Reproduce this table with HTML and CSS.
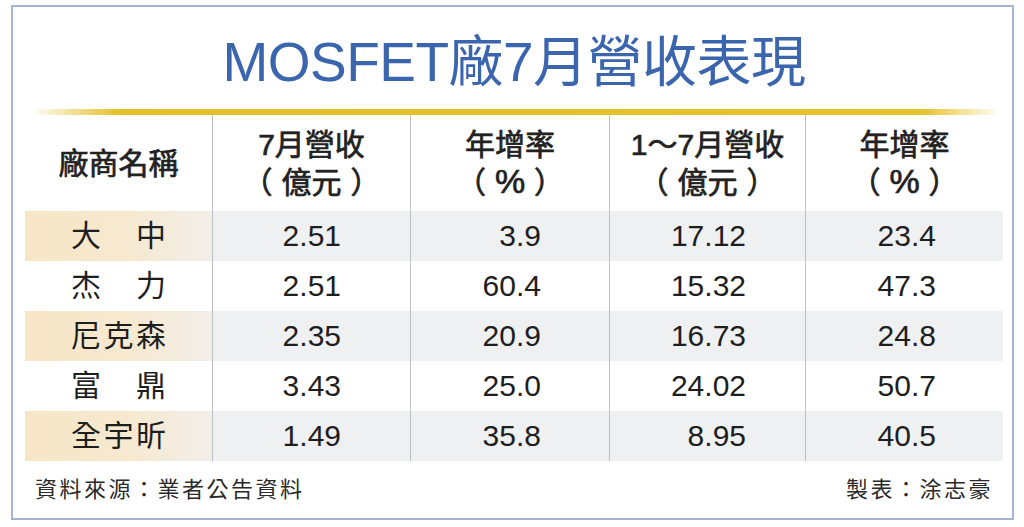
FILE: index.html
```html
<!DOCTYPE html>
<html lang="zh-Hant">
<head>
<meta charset="utf-8">
<title>MOSFET廠7月營收表現</title>
<link rel="stylesheet" href="styles.css">
</head>
<body>
<div class="frame">
  <h1 class="title">MOSFET廠7月營收表現</h1>
  <div class="gold"></div>
  <div class="table">
    <div class="row head">
      <div class="cell name-h">廠商名稱</div>
      <div class="cell">7月營收<br>（<span class="pi">億元</span>）</div>
      <div class="cell">年增率<br>（<span class="pi pct">%</span>）</div>
      <div class="cell">1～7月營收<br>（<span class="pi">億元</span>）</div>
      <div class="cell">年增率<br>（<span class="pi pct">%</span>）</div>
    </div>
    <div class="row band">
      <div class="cell name"><span class="nm"><span>大</span><span>中</span></span></div>
      <div class="cell num c2">2.51</div>
      <div class="cell num c3">3.9</div>
      <div class="cell num c4">17.12</div>
      <div class="cell num c5">23.4</div>
    </div>
    <div class="row">
      <div class="cell name"><span class="nm"><span>杰</span><span>力</span></span></div>
      <div class="cell num c2">2.51</div>
      <div class="cell num c3">60.4</div>
      <div class="cell num c4">15.32</div>
      <div class="cell num c5">47.3</div>
    </div>
    <div class="row band">
      <div class="cell name"><span class="nm"><span>尼</span><span>克</span><span>森</span></span></div>
      <div class="cell num c2">2.35</div>
      <div class="cell num c3">20.9</div>
      <div class="cell num c4">16.73</div>
      <div class="cell num c5">24.8</div>
    </div>
    <div class="row">
      <div class="cell name"><span class="nm"><span>富</span><span>鼎</span></span></div>
      <div class="cell num c2">3.43</div>
      <div class="cell num c3">25.0</div>
      <div class="cell num c4">24.02</div>
      <div class="cell num c5">50.7</div>
    </div>
    <div class="row band">
      <div class="cell name"><span class="nm"><span>全</span><span>宇</span><span>昕</span></span></div>
      <div class="cell num c2">1.49</div>
      <div class="cell num c3">35.8</div>
      <div class="cell num c4">8.95</div>
      <div class="cell num c5">40.5</div>
    </div>
  </div>
  <div class="footer">
    <span>資料來源：業者公告資料</span>
    <span>製表：涂志豪</span>
  </div>
</div>
</body>
</html>
```
FILE: styles.css
```css
* { box-sizing: border-box; }
html, body { margin: 0; padding: 0; background: #ffffff; }
body {
  width: 1024px;
  height: 527px;
  font-family: "Liberation Sans", "Noto Sans CJK TC", sans-serif;
  color: #1e1e1e;
  text-spacing-trim: space-all;
}
.frame {
  margin: 5px 0 0 11px;
  width: 1003px;
  height: 515px;
  border: 2px solid #a4b2d4;
  padding: 0 9px 0 12px;
  display: flex;
  flex-direction: column;
}
.title {
  margin: 0;
  padding-top: 8px;
  height: 102px;
  line-height: 94px;
  text-align: center;
  font-weight: normal;
  font-size: 55px;
  color: #3b65ad;
  letter-spacing: -0.5px;
}
.gold {
  height: 6px;
  margin: 0 3px 0 5px;
  background: linear-gradient(to right, rgba(230,194,43,0) 0%, #e4c02c 9%, #e6c22b 92%, rgba(230,194,43,0) 100%);
}
.table {
  display: flex;
  flex-direction: column;
}
.row {
  display: grid;
  grid-template-columns: 187px 198px 199px 196px 198px;
  height: 50px;
}
.row.head { height: 96px; }
.cell {
  display: flex;
  align-items: center;
  justify-content: center;
  font-size: 30px;
  line-height: 38px;
}
.cell + .cell { border-left: 1px solid #bfbfbf; }
.head .cell {
  display: block;
  text-align: center;
  font-weight: normal;
  font-size: 30px;
  color: #222;
  padding-top: 11px;
  -webkit-text-stroke: 0.7px #222;
}
.head .cell.name-h {
  display: flex;
  padding-top: 2px;
}
.pi { margin: 0 9px; }
.pi.pct {
  margin: 0 9px;
  font-size: 34px;
  line-height: 30px;
}
.name .nm {
  display: flex;
  justify-content: space-between;
  width: 95px;
}
.num { justify-content: flex-end; }
.c2 { padding-right: 69px; }
.c3 { padding-right: 68px; }
.c4 { padding-right: 59px; }
.c5 { padding-right: 67px; }
.band .cell { background: #eff0f2; }
.band .cell.name {
  background: linear-gradient(to right, #f7e6c6 0%, #f6e9d0 55%, #f1eee8 100%);
}
.footer {
  display: flex;
  justify-content: space-between;
  padding: 14px 10px 0 10px;
  font-size: 22px;
  line-height: 30px;
  letter-spacing: 2.5px;
  color: #2a2a2a;
}
```
